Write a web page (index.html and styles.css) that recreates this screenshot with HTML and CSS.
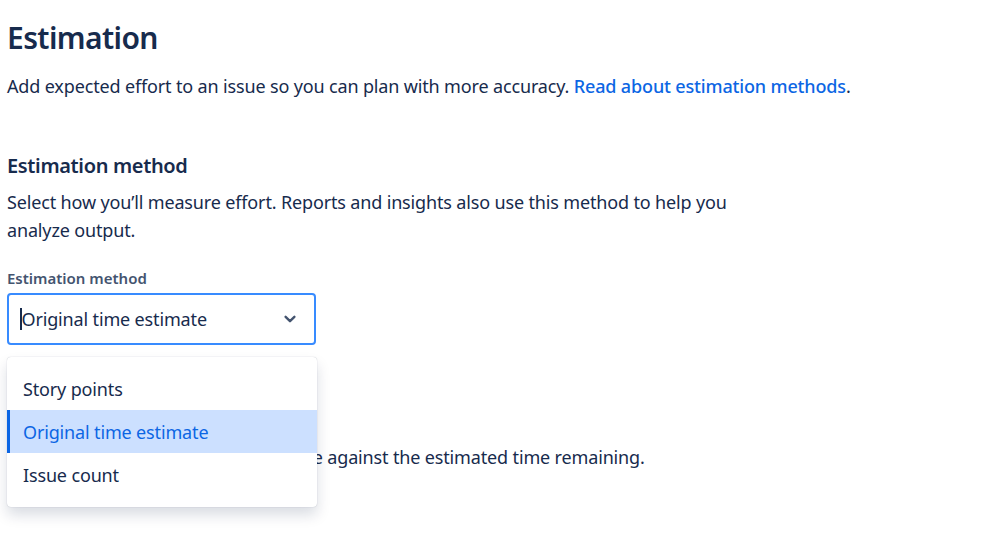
FILE: index.html
```html
<!DOCTYPE html>
<html lang="en">
<head>
<meta charset="utf-8">
<link rel="stylesheet" href="styles.css">
</head>
<body>
<main class="page">
  <h1 class="title">Estimation</h1>
  <p class="lead">Add expected effort to an issue so you can plan with more accuracy. <a class="link" href="#">Read about estimation methods</a>.</p>

  <h2 class="subtitle">Estimation method</h2>
  <p class="desc">Select how you’ll measure effort. Reports and insights also use this method to help you analyze output.</p>

  <div class="field">
    <label class="label">Estimation method</label>
    <div class="select">
      <span class="caret"></span>
      <span class="value">Original time estimate</span>
      <svg class="chevron" width="24" height="24" viewBox="0 0 24 24"><path d="M7.6 9.8l4.4 4.4 4.4-4.4" fill="none" stroke="#44546F" stroke-width="2.4" stroke-linecap="round" stroke-linejoin="round"/></svg>
    </div>
    <ul class="menu">
      <li class="option">Story points</li>
      <li class="option selected">Original time estimate</li>
      <li class="option">Issue count</li>
    </ul>
  </div>

  <div class="below">
    <h3 class="below-title">Original time estimate</h3>
    <p class="below-text">Log time spent on work, and compare against the estimated time remaining.</p>
  </div>
</main>
</body>
</html>
```
FILE: styles.css
```css
* { box-sizing: border-box; }
html, body { margin: 0; padding: 0; background: #fff; }
body {
  min-height: 534px;
  font-family: "Noto Sans", "Open Sans", sans-serif;
  color: #172B4D;
}
.page { padding: 0 7px; min-height: 534px; }
.title {
  margin: 0;
  padding-top: 18px;
  font-size: 30px;
  letter-spacing: -0.6px;
  font-weight: 600;
  line-height: 40px;
  color: #172B4D;
}
.lead {
  margin: 14px 0 0;
  font-size: 18px;
  letter-spacing: -0.15px;
  line-height: 28px;
  color: #172B4D;
}
.link { color: #0C66E4; font-weight: 500; text-decoration: none; }
.subtitle {
  margin: 52px 0 0;
  font-size: 20px;
  letter-spacing: -0.35px;
  font-weight: 600;
  line-height: 28px;
  color: #172B4D;
}
.desc {
  margin: 8px 0 0;
  max-width: 730px;
  font-size: 18px;
  letter-spacing: -0.15px;
  line-height: 28px;
  color: #172B4D;
}
.field { position: relative; margin-top: 24px; width: 309px; }
.label {
  display: block;
  font-size: 15px;
  font-weight: 600;
  line-height: 20px;
  color: #44546F;
}
.select {
  margin-top: 5px;
  height: 52px;
  border: 2px solid #388BFF;
  border-radius: 4px;
  display: flex;
  align-items: center;
  padding: 0 12px 0 11px;
}
.caret { width: 1.5px; height: 22px; background: #172B4D; margin-right: 0; }
.value { flex: 1; font-size: 18px; letter-spacing: -0.15px; color: #172B4D; }
.chevron { display: block; }
.menu {
  position: absolute;
  left: 0;
  top: 89px;
  width: 310px;
  margin: 0;
  padding: 10px 0 11px;
  list-style: none;
  background: #fff;
  border-radius: 4px;
  box-shadow: 0 0 1px rgba(9,30,66,0.31), 0 8px 14px rgba(9,30,66,0.15);
  z-index: 2;
}
.option {
  height: 43px;
  display: flex;
  align-items: center;
  padding-left: 16px;
  font-size: 18px;
  letter-spacing: -0.15px;
  color: #172B4D;
}
.option.selected {
  background: #CCE0FF;
  color: #0C66E4;
  box-shadow: inset 3px 0 0 #0C66E4;
}
.below { margin-top: 64px; }
.below-title { margin: 0; font-size: 18px; font-weight: 600; line-height: 28px; }
.below-text { margin: 6px 0 0; font-size: 18px; letter-spacing: -0.15px; line-height: 28px; color: #172B4D; }
```
